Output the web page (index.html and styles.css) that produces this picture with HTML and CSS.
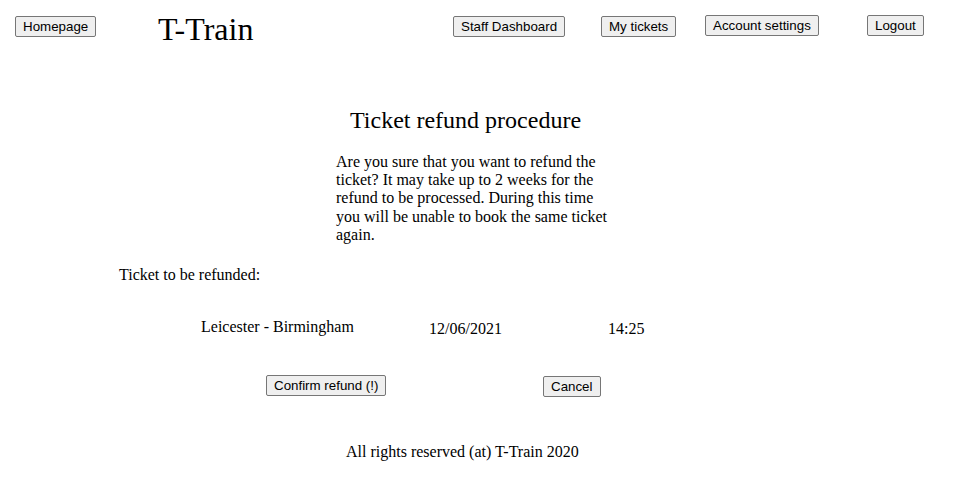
FILE: index.html
```html
<!DOCTYPE html>
<html lang="en">
<head>
<meta charset="utf-8">
<title>T-Train - Ticket refund</title>
<link rel="stylesheet" href="styles.css">
</head>
<body>
<header class="topbar">
  <div class="cell cell-home"><button class="btn">Homepage</button></div>
  <div class="cell cell-brand"><h1 class="brand">T-Train</h1></div>
  <div class="cell cell-staff"><button class="btn">Staff Dashboard</button></div>
  <div class="cell cell-tickets"><button class="btn">My tickets</button></div>
  <div class="cell cell-account"><button class="btn btn-raised">Account settings</button></div>
  <div class="cell cell-logout"><button class="btn btn-raised">Logout</button></div>
</header>

<main class="content">
  <section class="intro">
    <h2 class="title">Ticket refund procedure</h2>
    <p class="notice">Are you sure that you want to refund the ticket? It may take up to 2 weeks for the refund to be processed. During this time you will be unable to book the same ticket again.</p>
  </section>

  <p class="label">Ticket to be refunded:</p>

  <div class="ticket">
    <span class="route">Leicester - Birmingham</span>
    <span class="date">12/06/2021</span>
    <span class="time">14:25</span>
  </div>

  <div class="actions">
    <button class="btn btn-confirm">Confirm refund (!)</button>
    <button class="btn btn-cancel">Cancel</button>
  </div>
</main>

<footer class="footer">All rights reserved (at) T-Train 2020</footer>
</body>
</html>
```
FILE: styles.css
```css
html, body {
  margin: 0;
  padding: 0;
  background: #ffffff;
}

body {
  font-family: "Liberation Serif", "Times New Roman", serif;
  font-size: 16px;
  line-height: 1.15;
  color: #000000;
  width: 964px;
}

.btn {
  font-family: "Liberation Sans", Arial, sans-serif;
  font-size: 13.333px;
  line-height: 16px;
  color: #000000;
  background: #efefef;
  border: 1px solid #767676;
  border-radius: 2px;
  padding: 2px 7px 1px;
  margin: 0;
  height: 21px;
  box-sizing: border-box;
  cursor: pointer;
}

/* header */
.topbar {
  display: grid;
  grid-template-columns: 15px 143px 295px 148px 104px 162px 1fr;
  align-items: start;
  padding-top: 11px;
}

.cell-home { grid-column: 2; padding-top: 5px; }
.cell-brand { grid-column: 3; }
.cell-staff { grid-column: 4; padding-top: 5px; }
.cell-tickets { grid-column: 5; padding-top: 5px; }
.cell-account { grid-column: 6; padding-top: 4px; }
.cell-logout { grid-column: 7; padding-top: 4px; }

.brand {
  margin: 0;
  font-size: 32px;
  font-weight: normal;
  line-height: 37px;
}

/* main */
.content {
  display: flex;
  flex-direction: column;
}

.intro {
  margin-left: 336px;
  width: 276px;
  margin-top: 59px;
}

.title {
  margin: 0;
  padding-left: 14px;
  font-size: 24px;
  font-weight: normal;
  line-height: 27.6px;
}

.notice {
  margin: 18px 0 0;
}

.label {
  margin: 21px 0 0 119px;
}

.ticket {
  display: grid;
  grid-template-columns: 201px 228px 179px 1fr;
  margin-top: 34px;
}

.route { grid-column: 2; }
.date { grid-column: 3; padding-top: 2px; }
.time { grid-column: 4; padding-top: 2px; }

.actions {
  display: grid;
  grid-template-columns: 266px 277px 1fr;
  align-items: start;
  margin-top: 37px;
}

.btn-confirm { grid-column: 2; justify-self: start; }
.btn-cancel { grid-column: 3; justify-self: start; margin-top: 1px; }

.footer {
  margin: 46px 0 0 346px;
}
```
